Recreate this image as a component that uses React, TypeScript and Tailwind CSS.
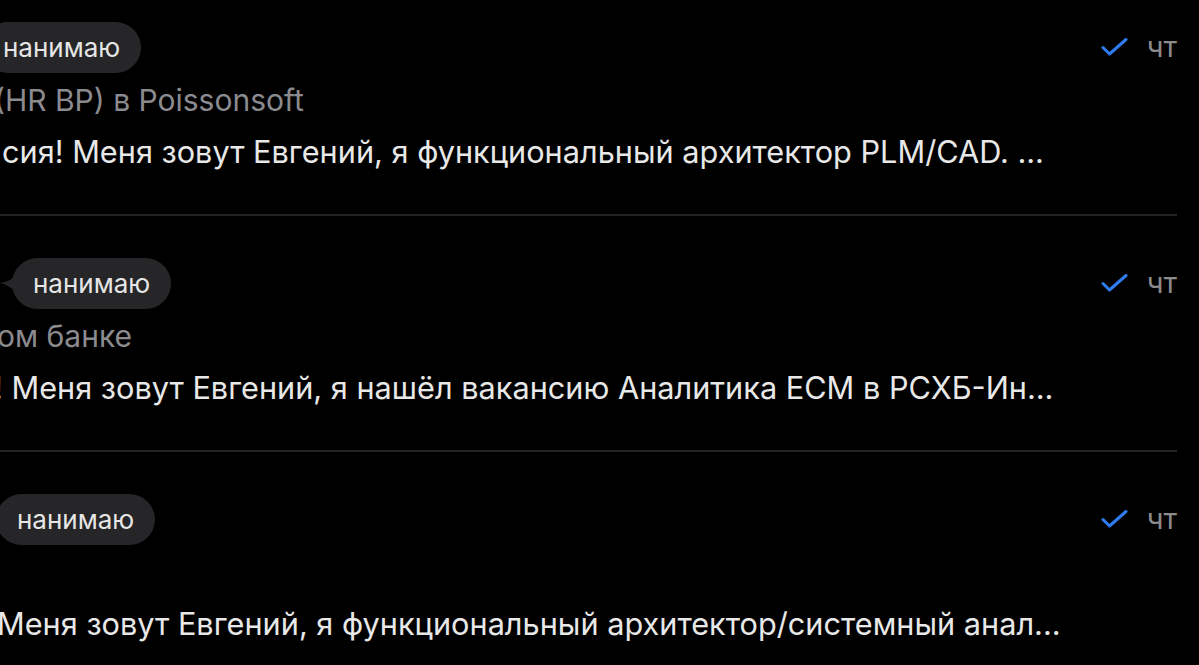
import React from "react";

type Chat = {
  bubbleLeft: number;
  showTail: boolean;
  subtitle: string;
  subtitleShift: number;
  message: string;
  messageShift: number;
};

const chats: Chat[] = [
  {
    bubbleLeft: -18,
    showTail: false,
    subtitle: "(HR BP) в Poissonsoft",
    subtitleShift: -6,
    message: "сия! Меня зовут Евгений, я функциональный архитектор PLM/CAD. ...",
    messageShift: 2,
  },
  {
    bubbleLeft: 12,
    showTail: true,
    subtitle: "ом банке",
    subtitleShift: -3,
    message: "! Меня зовут Евгений, я нашёл вакансию Аналитика ECM в РСХБ-Ин...",
    messageShift: -6,
  },
  {
    bubbleLeft: -4,
    showTail: false,
    subtitle: "",
    subtitleShift: 0,
    message: "Меня зовут Евгений, я функциональный архитектор/системный анал...",
    messageShift: -3,
  },
];

function ReadCheck() {
  return (
    <svg width="27" height="18" viewBox="0 0 27 18" fill="none">
      <path
        d="M2 9.5 L8.5 16 L25 1.5"
        stroke="#2f7bf0"
        strokeWidth="3"
        strokeLinecap="round"
        strokeLinejoin="round"
      />
    </svg>
  );
}

function StatusBubble({ left, tail }: { left: number; tail: boolean }) {
  return (
    <div className="relative flex h-[51px] items-center" style={{ marginLeft: left }}>
      {tail && (
        <svg
          className="absolute left-[-12px] top-[14px]"
          width="18"
          height="24"
          viewBox="0 0 18 24"
        >
          <path d="M18 0 C14 6 8 10 0 11 C8 13 14 17 18 24 Z" fill="#262628" />
        </svg>
      )}
      <div className="flex h-[51px] items-center rounded-full bg-[#262628] pl-[21px] pr-[21px] text-[26px] text-[#e6e6e6]">
        нанимаю
      </div>
    </div>
  );
}

function ChatRow({ chat, first }: { chat: Chat; first: boolean }) {
  return (
    <div
      className={`flex border-b-2 border-[#232325] pb-[33px] ${first ? "pt-[22px]" : "pt-[42px]"}`}
    >
      <div className="min-w-0 flex-1 overflow-hidden whitespace-nowrap">
        <StatusBubble left={chat.bubbleLeft} tail={chat.showTail} />
        <div
          className="h-[54px] text-[30px] leading-[54px] text-[#8b8b8f]"
          style={{ marginLeft: chat.subtitleShift }}
        >
          {chat.subtitle}
        </div>
        <div
          className="h-[54px] text-[30.7px] leading-[50px] text-[#e8e8e8]"
          style={{ marginLeft: chat.messageShift }}
        >
          {chat.message}
        </div>
      </div>
      <div className="flex h-[49px] shrink-0 items-center gap-[19px] pl-4">
        <ReadCheck />
        <span className="text-[29px] text-[#8b8b8f]">чт</span>
      </div>
    </div>
  );
}

export default function App() {
  return (
    <div
      className="h-[665px] w-[1199px] overflow-hidden bg-black"
      style={{ fontFamily: "Inter, 'Noto Sans', sans-serif" }}
    >
      <div className="mr-[22px]">
        {chats.map((c, i) => (
          <ChatRow key={i} chat={c} first={i === 0} />
        ))}
      </div>
    </div>
  );
}
